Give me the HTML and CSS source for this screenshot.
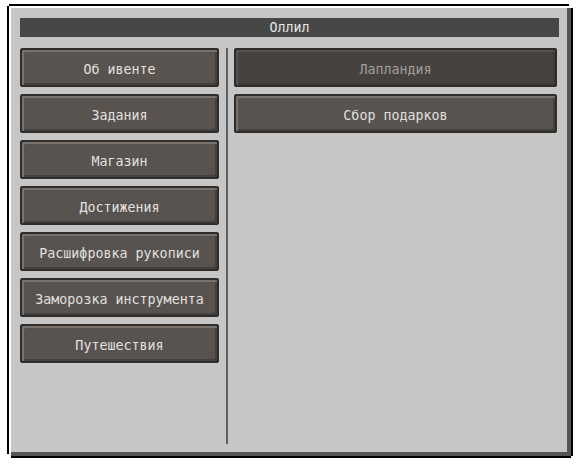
FILE: index.html
```html
<!DOCTYPE html>
<html lang="ru">
<head>
<meta charset="utf-8">
<link rel="stylesheet" href="styles.css">
</head>
<body>
<div class="frame">
  <div class="panel">
    <div class="title">Оллил</div>
    <div class="columns">
      <div class="col-left">
        <div class="btn">Об ивенте</div>
        <div class="btn">Задания</div>
        <div class="btn">Магазин</div>
        <div class="btn">Достижения</div>
        <div class="btn">Расшифровка рукописи</div>
        <div class="btn">Заморозка инструмента</div>
        <div class="btn">Путешествия</div>
      </div>
      <div class="divider"></div>
      <div class="col-right">
        <div class="btn disabled">Лапландия</div>
        <div class="btn">Сбор подарков</div>
      </div>
    </div>
  </div>
</div>
</body>
</html>
```
FILE: styles.css
```css
html, body {
  margin: 0;
  padding: 0;
  background: #ffffff;
}
body {
  width: 578px;
  height: 467px;
  overflow: hidden;
  font-family: "DejaVu Sans Mono", "Liberation Mono", monospace;
  font-size: 13.33px;
}
.frame {
  margin: 4px 0 0 7px;
  width: 566px;
  height: 454px;
  box-sizing: border-box;
  padding: 2px;
  background: #000000;
  clip-path: polygon(2px 0, calc(100% - 4px) 0, calc(100% - 4px) 2px, calc(100% - 2px) 2px, calc(100% - 2px) 4px, 100% 4px, 100% calc(100% - 2px), calc(100% - 2px) calc(100% - 2px), calc(100% - 2px) 100%, 4px 100%, 4px calc(100% - 2px), 2px calc(100% - 2px), 2px calc(100% - 4px), 0 calc(100% - 4px), 0 2px, 2px 2px);
}
.panel {
  width: 100%;
  height: 100%;
  box-sizing: border-box;
  background: #c6c6c6;
  box-shadow: inset 2px 2px 0 #ffffff, inset -4px -4px 0 #555555;
  padding: 12px 0 0 11px;
  display: flex;
  flex-direction: column;
}
.title {
  width: 539px;
  height: 19px;
  background: #474747;
  color: #e6e6e6;
  text-align: center;
  line-height: 20px;
}
.columns {
  display: flex;
  margin-top: 11px;
  height: 396px;
}
.col-left {
  width: 199px;
  display: flex;
  flex-direction: column;
  gap: 7px;
}
.divider {
  width: 2px;
  margin-left: 7px;
  margin-right: 6px;
  background: #5f5f5f;
  height: 396px;
}
.col-right {
  width: 323px;
  display: flex;
  flex-direction: column;
  gap: 7px;
}
.btn {
  height: 39px;
  box-sizing: border-box;
  padding-top: 2px;
  background: #58534f;
  color: #e0e0e0;
  text-align: center;
  line-height: 39px;
  white-space: nowrap;
  border-radius: 3px;
  box-shadow: inset 0 0 0 2px #2f2c2a, inset 3px 3px 0 1px #77726d, inset -3px -3px 0 1px #433f3c;
}
.btn.disabled {
  background: #46423f;
  color: #a0a0a0;
  box-shadow: inset 0 0 0 2px #2f2c2a, inset 3px 3px 0 1px #55514d, inset -3px -3px 0 1px #3c3937;
}
```
